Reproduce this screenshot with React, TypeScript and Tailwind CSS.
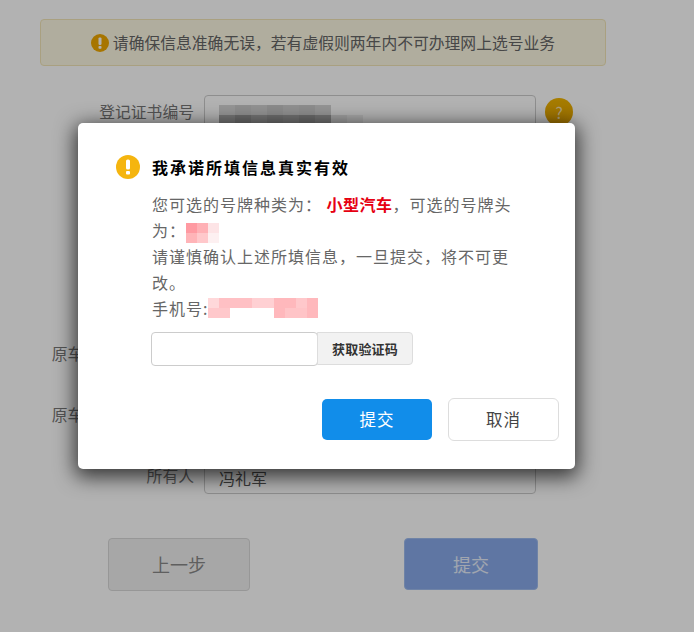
const font = "font-['Microsoft_YaHei','Noto_Sans_CJK_SC','Noto_Sans',sans-serif]";

function WarnIcon({ size, fill }: { size: number; fill: string }) {
  return (
    <svg width={size} height={size} viewBox="0 0 24 24" className="shrink-0">
      <circle cx="12" cy="12" r="12" fill={fill} />
      <rect x="10" y="4.5" width="4" height="10" rx="1.6" fill="#fff" />
      <rect x="10" y="16" width="4" height="3.6" rx="1" fill="#fff" />
    </svg>
  );
}

function Mosaic({ colors, w, h }: { colors: string[][]; w: number; h: number }) {
  return (
    <span className="inline-flex flex-col align-middle">
      {colors.map((row, i) => (
        <span key={i} className="flex">
          {row.map((c, j) => (
            <span key={j} className="block" style={{ width: w, height: h, backgroundColor: c }} />
          ))}
        </span>
      ))}
    </span>
  );
}

const labels = ["登记证书编号", "", "", "", "原车辆号牌号码确认", "原车辆识别代号确认", "所有人"];

function FormRow({ label, index }: { label: string; index: number }) {
  return (
    <div className="flex items-center h-[33px]">
      <div className={`w-[194px] text-right text-[15.8px] text-[#777] whitespace-nowrap ${index >= 4 ? "pb-[3px]" : ""}`}>{label}</div>
      <div className="ml-[10px] w-[332px] h-full rounded-[4px] border border-[#ccc] bg-white text-[16px] text-[#555] pl-[14px] flex items-start">
        {index === 6 && <span className="mt-[4px]">冯礼军</span>}
        {index === 0 && (
          <span className="mt-[4px] block">
            <Mosaic
              w={16}
              h={10}
              colors={[
                ["#d6d6d6", "#cccccc", "#d2d2d2", "#c8c8c8", "#cfcfcf", "#cacaca", "#d4d4d4", "#ffffff", "#ffffff"],
                ["#a8a8a8", "#989898", "#a6a6a6", "#9c9c9c", "#a2a2a2", "#989898", "#a4a4a4", "#e4e4e4", "#f0f0f0"],
              ]}
            />
          </span>
        )}
      </div>
      {index === 0 && (
        <div className="ml-[9px] w-[28px] h-[28px] rounded-full bg-gradient-to-b from-[#f0b400] to-[#e0a000] text-white/70 text-[16px] flex items-center justify-center">
          ?
        </div>
      )}
    </div>
  );
}

export default function App() {
  return (
    <div className={`relative w-[694px] h-[632px] overflow-hidden bg-white ${font}`}>
      {/* page under the dialog */}
      <div className="pt-[19px]">
        <div className="ml-[40px] w-[566px] h-[47px] rounded-[4px] border border-[#f3e6b8] bg-[#fcf8e3] flex items-center justify-center gap-[4px] text-[15.8px] text-[#666]">
          <WarnIcon size={18} fill="#f0a800" />
          <span>请确保信息准确无误，若有虚假则两年内不可办理网上选号业务</span>
        </div>
        <div className="mt-[29px] flex flex-col gap-[28px]">
          {labels.map((l, i) => (
            <FormRow key={i} label={l} index={i} />
          ))}
        </div>
        <div className="mt-[44px] ml-[108px] flex">
          <button className="w-[142px] h-[53px] rounded-[4px] border border-[#d8d8d8] bg-[#f0f0f0] text-[18px] text-[#888]">
            上一步
          </button>
          <button className="ml-[154px] w-[134px] h-[52px] rounded-[4px] border border-[#9fbcee] bg-[#88aaea] text-[18px] text-white/80">
            提交
          </button>
        </div>
      </div>

      <div className="absolute inset-0 bg-black/30" />

      {/* dialog */}
      <div className="absolute left-[78px] top-[123px] w-[497px] h-[346px] rounded-[5px] bg-white shadow-[0_5px_20px_3px_rgba(0,0,0,0.7)] pl-[38px] pt-[32px]">
        <div className="flex items-center h-[24px]">
          <WarnIcon size={24} fill="#f5b50f" />
          <span className="ml-[12px] text-[16px] font-bold text-black tracking-[2px] whitespace-nowrap">我承诺所填信息真实有效</span>
        </div>
        <div className="ml-[36px] mt-[12px] w-[368px] text-[16px] leading-[26px] text-[#666] tracking-[1px]">
          <div className="whitespace-nowrap">
            您可选的号牌种类为：&nbsp;
            <span className="font-bold text-[#e60012] tracking-[0.5px]">小型汽车</span>
            ，可选的号牌头
          </div>
          <div>
            为：
            <Mosaic w={11} h={10} colors={[["#ff9aa2", "#ffb0b5", "#fde4e6"], ["#ffb4b8", "#ffc8cb", "#fdf0f1"]]} />
          </div>
          <div>请谨慎确认上述所填信息，一旦提交，将不可更改。</div>
          <div className="flex items-center">
            手机号:
            <Mosaic
              w={11}
              h={10}
              colors={[
                ["#ffd8da", "#ffc0c4", "#ffc0c4", "#ffc0c4", "#ffd0d3", "#ffd0d3", "#ffb8bc", "#ffb8bc", "#ffc8cb", "#ffb8bc"],
                ["#ffc8cb", "#ffc8cb", "#ffffff", "#ffffff", "#ffffff", "#ffffff", "#ffb8bc", "#ffc4c7", "#ffc4c7", "#ffb8bc"],
              ]}
            />
          </div>
        </div>
        <div className="ml-[35px] mt-[11px] flex items-start">
          <div className="w-[167px] h-[34px] rounded-[4px] border border-[#ccc] bg-white" />
          <button className="-ml-px w-[96px] h-[33px] rounded-r-[4px] border border-[#ddd] bg-[#f2f2f2] text-[13px] font-bold text-[#333] tracking-[0.2px]">
            获取验证码
          </button>
        </div>
        <div className="mt-[32px] ml-[206px] flex items-center">
          <button className="w-[110px] h-[41px] rounded-[5px] bg-[#118dea] text-[16.5px] text-white tracking-[1px]">提交</button>
          <button className="ml-[16px] w-[111px] h-[43px] rounded-[6px] border border-[#ddd] bg-white text-[16.5px] text-[#444] tracking-[1px]">
            取消
          </button>
        </div>
      </div>
    </div>
  );
}
